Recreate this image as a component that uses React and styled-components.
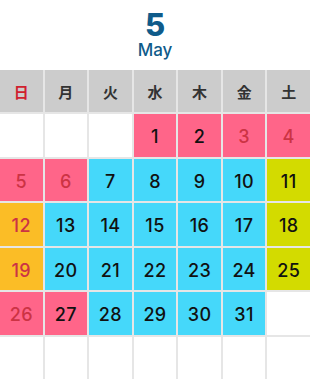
import React from 'react'
import styled, { createGlobalStyle } from 'styled-components'

const GlobalStyle = createGlobalStyle`
    html, body {
        margin: 0;
        padding: 0;
        background: #ffffff;
        font-family: Inter, "Liberation Sans", Arial, sans-serif;
    }
`

const WEEKDAYS = ["日", "月", "火", "水", "木", "金", "土"];

// kind: pink / blue / orange / lime / empty ; red: holiday text colour
const DAYS = [
    null, null, null,
    { n: 1, kind: "pink" }, { n: 2, kind: "pink" }, { n: 3, kind: "pink", red: true }, { n: 4, kind: "pink", red: true },
    { n: 5, kind: "pink", red: true }, { n: 6, kind: "pink", red: true }, { n: 7, kind: "blue" }, { n: 8, kind: "blue" },
    { n: 9, kind: "blue" }, { n: 10, kind: "blue" }, { n: 11, kind: "lime" },
    { n: 12, kind: "orange", red: true }, { n: 13, kind: "blue" }, { n: 14, kind: "blue" }, { n: 15, kind: "blue" },
    { n: 16, kind: "blue" }, { n: 17, kind: "blue" }, { n: 18, kind: "lime" },
    { n: 19, kind: "orange", red: true }, { n: 20, kind: "blue" }, { n: 21, kind: "blue" }, { n: 22, kind: "blue" },
    { n: 23, kind: "blue" }, { n: 24, kind: "blue" }, { n: 25, kind: "lime" },
    { n: 26, kind: "pink", red: true }, { n: 27, kind: "pink" }, { n: 28, kind: "blue" }, { n: 29, kind: "blue" },
    { n: 30, kind: "blue" }, { n: 31, kind: "blue" }, null,
    null, null, null, null, null, null, null,
];

const COLORS = {
    pink: "#ff6589",
    blue: "#45d8fa",
    orange: "#fbbd26",
    lime: "#d3db00",
    empty: "#ffffff",
};

export default function App() {
    return (
        <>
            <GlobalStyle />
            <Page>
                <Title>
                    <DayNumber>5</DayNumber>
                    <MonthName>May</MonthName>
                </Title>
                <Grid>
                    {WEEKDAYS.map((w, i) => (
                        <WeekCell key={w} $red={i === 0}>{w}</WeekCell>
                    ))}
                    {DAYS.map((d, i) => (
                        <DayCell
                            key={i}
                            $bg={COLORS[d ? d.kind : "empty"]}
                            $red={d && d.red}>
                            {d ? d.n : ""}
                        </DayCell>
                    ))}
                </Grid>
            </Page>
        </>
    )
};

const Page = styled.div`
    width: 310px;
    height: 380px;
    overflow: hidden;
`

const Title = styled.div`
    height: 70px;
    padding-top: 9px;
    box-sizing: border-box;
    display: flex;
    flex-direction: column;
    align-items: center;
    color: #0f5b8a;
`

const DayNumber = styled.div`
    font-size: 31px;
    font-weight: 800;
    line-height: 31px;
`

const MonthName = styled.div`
    font-size: 17px;
    font-weight: 500;
    line-height: 19px;
    margin-top: 1px;
`

const Grid = styled.div`
    display: grid;
    grid-template-columns: repeat(7, 1fr);
    grid-template-rows: 42px;
    grid-auto-rows: 42.5px;
    gap: 2px;
    background-color: #e6e6e6;
`

const WeekCell = styled.div`
    background-color: #cccccc;
    display: flex;
    justify-content: center;
    align-items: center;
    font-family: "Noto Sans CJK JP", "Liberation Sans", sans-serif;
    font-size: 15px;
    font-weight: 700;
    color: ${props => props.$red ? "#d0202e" : "#333333"};
`

const DayCell = styled.div`
    background-color: ${props => props.$bg};
    display: flex;
    justify-content: center;
    align-items: center;
    padding-top: 3px;
    box-sizing: border-box;
    font-size: 18px;
    font-weight: 500;
    letter-spacing: 0.4px;
    color: ${props => props.$red ? "#cc3344" : "#111111"};
`
